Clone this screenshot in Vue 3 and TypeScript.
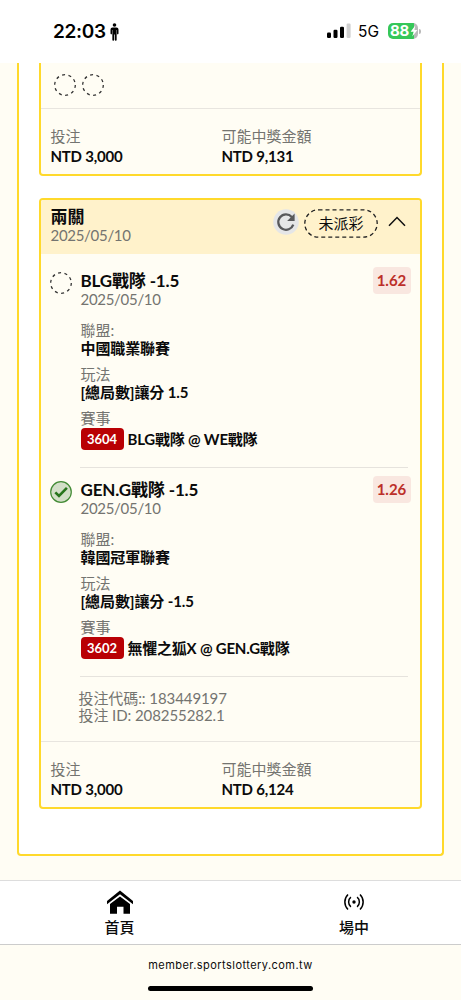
<script setup lang="ts">
interface Leg {
  won: boolean
  title: string
  date: string
  odds: string
  league: string
  play: string
  code: string
  match: string
}

const legs: Leg[] = [
  { won: false, title: 'BLG戰隊 -1.5', date: '2025/05/10', odds: '1.62', league: '中國職業聯賽', play: '[總局數]讓分 1.5', code: '3604', match: 'BLG戰隊 @ WE戰隊' },
  { won: true, title: 'GEN.G戰隊 -1.5', date: '2025/05/10', odds: '1.26', league: '韓國冠軍聯賽', play: '[總局數]讓分 -1.5', code: '3602', match: '無懼之狐X @ GEN.G戰隊' },
]
</script>

<template>
  <div class="screen">
    <header class="status">
      <span class="clock">22:03</span>
      <svg class="person" width="9" height="18" viewBox="0 0 9 18">
        <circle cx="4.5" cy="2" r="1.8" />
        <path d="M2.5 4.4h4q2 0 2 2v4.2q0 .8-.75.8T7 10.600V7h-.35v10q0 .8-.9.8t-.9-.8v-5.500h-.7V17q0 .8-.9.8t-.9-.8V7H2v3.600q0 .8-.75.8T.5 10.600V6.400q0-2 2-2z" />
      </svg>
      <svg class="signal" width="24" height="16" viewBox="0 0 24 16">
        <rect x="0" y="9.500" width="4" height="5.500" rx="1.200" />
        <rect x="6.500" y="6.800" width="4" height="8.200" rx="1.200" />
        <rect x="13" y="3.700" width="4" height="11.300" rx="1.200" />
        <rect x="19.600" y="0.500" width="4" height="14.500" rx="1.200" fill="#cfcfcf" />
      </svg>
      <span class="net">5G</span>
      <span class="battery">
        <span class="level">88</span>
        <svg class="bolt" width="8" height="12" viewBox="0 0 8 12"><path d="M5.300 .5.6 6.800h3L2.300 11.500 7.400 5.100h-3z" fill="#fff" /></svg>
      </span>
      <span class="cap"></span>
    </header>

    <main class="content">
      <div class="panel">
        <section class="card first">
          <div class="dots"><svg v-for="n in 2" :key="n" width="22" height="22" viewBox="0 0 22 22"><circle cx="11" cy="11" r="10.300" class="dash" /></svg></div>
          <div class="totals">
            <div class="stake"><p class="muted">投注</p><p class="strong">NTD 3,000</p></div>
            <div><p class="muted">可能中獎金額</p><p class="strong">NTD 9,131</p></div>
          </div>
        </section>

        <section class="card second">
          <div class="head">
            <div class="name"><h2>兩關</h2><p class="date">2025/05/10</p></div>
            <svg class="refresh" width="26" height="26" viewBox="0 0 26 26">
              <circle cx="13" cy="13" r="12.800" fill="#e5e6e7" />
              <path d="M20.300 15.600A7.700 7.700 0 1 1 18.800 8" fill="none" stroke="#58595b" stroke-width="2.300" />
              <path d="M21.600 4.600v7.400h-7.500z" fill="#58595b" />
            </svg>
            <span class="pill">
              <svg width="74" height="29" viewBox="0 0 74 29"><rect x=".8" y=".8" width="72.400" height="27.400" rx="13.700" class="pilldash" /></svg>
              <span>未派彩</span>
            </span>
            <svg class="chevron" width="18" height="11" viewBox="0 0 18 11"><path d="M1 9.800 9 1.500l8 8.300" fill="none" stroke="#111" stroke-width="1.500" /></svg>
          </div>

          <article v-for="leg in legs" :key="leg.code" class="leg">
            <svg class="state" width="22" height="22" viewBox="0 0 22 22">
              <template v-if="leg.won">
                <circle cx="11" cy="11" r="10.300" fill="#d3dfc8" stroke="#438b35" stroke-width="1.200" />
                <path d="M5.300 11.300 9 15l7.900-8.100" fill="none" stroke="#28751c" stroke-width="2.600" />
              </template>
              <circle v-else cx="11" cy="11" r="10.300" class="dash" />
            </svg>
            <div class="info">
              <h3>{{ leg.title }}</h3>
              <p class="date">{{ leg.date }}</p>
              <p class="muted gap">聯盟:</p>
              <p class="strong">{{ leg.league }}</p>
              <p class="muted">玩法</p>
              <p class="strong">{{ leg.play }}</p>
              <p class="muted">賽事</p>
              <p class="match"><span class="code">{{ leg.code }}</span><span class="strong">{{ leg.match }}</span></p>
            </div>
            <span class="odds">{{ leg.odds }}</span>
          </article>

          <div class="ids"><p>投注代碼:: 183449197</p><p>投注 ID: 208255282.1</p></div>
          <div class="totals">
            <div class="stake"><p class="muted">投注</p><p class="strong">NTD 3,000</p></div>
            <div><p class="muted">可能中獎金額</p><p class="strong">NTD 6,124</p></div>
          </div>
        </section>
      </div>
    </main>

    <nav class="tabs">
      <a class="tab home">
        <svg width="28" height="25" viewBox="0 0 28 25">
          <path d="M14 .5 27 11v3.300L14 4.300 1 14.300V11z" />
          <path d="M14 6.500 24 14v9.700h-6.500v-7h-6.500v7H4V14z" />
        </svg>
        <span>首頁</span>
      </a>
      <a class="tab live">
        <svg width="22" height="25" viewBox="0 0 22 25" fill="none" stroke="#000" stroke-width="1.500">
          <circle cx="11" cy="12" r="1.700" fill="#000" stroke="none" />
          <path d="M7.900 7.200a6.200 6.200 0 0 0 0 9.600M14.100 7.200a6.200 6.200 0 0 1 0 9.600M5 4.500a10.500 10.500 0 0 0 0 15M17 4.500a10.500 10.500 0 0 1 0 15" />
        </svg>
        <span>場中</span>
      </a>
    </nav>
    <footer class="browser"><span>member.sportslottery.com.tw</span><i></i></footer>
  </div>
</template>

<style>
body { margin: 0; background: #fffdf4; }
</style>

<style scoped>
.screen { width: 461px; height: 1000px; overflow: hidden; display: flex; flex-direction: column; background: #fffdf4; font-family: Lato, "Noto Sans CJK TC", sans-serif; color: #0b0b0b; }
* { box-sizing: border-box; }
p, h2, h3 { margin: 0; white-space: nowrap; }
.status { height: 63px; flex: none; background: #fff; display: flex; align-items: flex-start; padding-left: 53px; font-family: Inter, sans-serif; color: #000; }
.clock { width: 57px; font-size: 19px; line-height: 24px; margin-top: 20px; font-weight: 600; letter-spacing: -.3px; }
.person { margin-top: 23px; }
.signal { margin: 23px 0 0 208px; }
.net { width: 30px; margin: 20px 0 0 7px; font-size: 15.500px; line-height: 24px; }
.battery { width: 30px; height: 16px; margin-top: 23px; border-radius: 5px; background: linear-gradient(90deg, #35c759 88%, #b9b9b9 88%); display: flex; align-items: center; padding-left: 2px; }
.level { color: #fff; font-size: 15px; font-weight: 700; line-height: 16px; width: 20px; letter-spacing: -.2px; }
.bolt { flex: none; }
.cap { width: 2px; height: 5px; border-radius: 0 2px 2px 0; margin: 29px 0 0 1px; background: #b9b9b9; }
.content { height: 817px; flex: none; padding: 0 17px; overflow: hidden; }
.panel { height: 793px; background: #fff; border: 2px solid #ffd92b; border-top: 0; border-radius: 0 0 4px 4px; padding: 0 20px; }
.card { border: 2px solid #ffd92b; border-radius: 4px; background: #fffdf4; overflow: hidden; }
.first { height: 113px; border-top: 0; border-radius: 0 0 4px 4px; }
.second { margin-top: 22px; height: 611px; }
.dots { height: 45px; padding: 11px 0 0 12.500px; display: flex; gap: 6px; }
.dash { fill: none; stroke: #333; stroke-width: 1.300; stroke-dasharray: 3 3.470; }
.totals { border-top: 1px solid #e8e5df; padding: 17px 0 0 9.500px; display: flex; }
.stake { width: 171px; }
.muted { font-size: 15px; line-height: 20px; height: 20px; color: #747470; }
.strong { font-size: 15px; line-height: 20px; font-weight: 700; letter-spacing: -.22px; }
.info > .strong { letter-spacing: -.1px; }
.head { height: 54px; background: #fff2cb; display: flex; padding-left: 9.500px; }
.name { width: 222.500px; padding-top: 7px; }
h2, h3 { font-size: 17px; line-height: 20px; font-weight: 700; }
h3 { letter-spacing: -.15px; }
.date { font-size: 15px; line-height: 16px; color: #747470; letter-spacing: -.3px; }
.refresh { margin-top: 9px; }
.pill { width: 74px; height: 29px; margin: 9px 0 0 5px; position: relative; text-align: center; font-size: 15px; line-height: 29px; }
.pill svg { position: absolute; left: 0; top: 0; }
.pilldash { fill: none; stroke: #222; stroke-width: 1.300; stroke-dasharray: 4 3; }
.chevron { margin: 16px 0 0 10px; }
.leg { height: 209px; padding-left: 9px; display: flex; }
.leg + .leg { height: 210px; }
.state { margin-top: 18px; flex: none; }
.info { margin-left: 8px; flex: none; width: 328px; border-bottom: 1px solid #e6e3dd; height: 214px; padding: 17px 0 0 .5px; }
.gap { margin-top: 14px; }
.info .muted { height: 18px; line-height: 18px; }
.info > .strong { height: 18px; line-height: 18px; margin-bottom: 8px; }
.match { display: flex; align-items: center; height: 22px; margin-top: 1px; }
.code { width: 43px; height: 22px; margin-right: 4px; border-radius: 4px; background: #b90004; color: #fff; text-align: center; font-size: 13px; font-weight: 700; line-height: 22px; }
.odds { flex: none; width: 38px; height: 27px; margin: 13px 0 0 -35.500px; border-radius: 4px; background: #f9e7e0; color: #bc2f29; font-size: 15px; font-weight: 700; line-height: 27px; text-align: center; }
.ids { height: 68px; padding: 17px 0 0 37.500px; font-size: 15px; line-height: 17px; color: #747470; letter-spacing: -.08px; }
.tabs { height: 65px; flex: none; border-top: 1px solid #ddd; border-bottom: 1px solid #ccc; background: #fff; display: flex; }
.tab { flex: none; display: flex; flex-direction: column; align-items: center; padding-top: 9px; font-size: 15px; line-height: 20px; font-weight: 500; }
.home { width: 239px; }
.live { width: 230px; }
.tab span { margin-top: 2px; font-family: "Noto Sans CJK TC", sans-serif; }
.browser { height: 55px; display: flex; flex-direction: column; align-items: center; padding-top: 12px; font: 11px/16px Inter, sans-serif; letter-spacing: .45px; }
.browser i { width: 165px; height: 5px; border-radius: 3px; background: #000; margin-top: 13px; }
</style>
